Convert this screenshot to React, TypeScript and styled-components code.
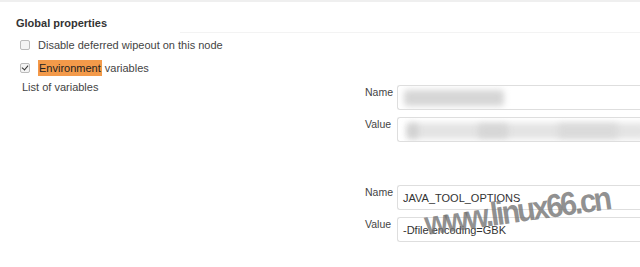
import React from "react";
import styled, { createGlobalStyle } from "styled-components";

const Global = createGlobalStyle`
  html, body { margin: 0; padding: 0; background: #fff; }
  body { font-family: "Liberation Sans", Arial, sans-serif; color: #333; }
`;

const Page = styled.div`
  position: relative;
  width: 640px;
  height: 267px;
  overflow: hidden;
  border-top: 2px solid #efefef;
  box-sizing: border-box;
`;

const Header = styled.div`
  font-size: 11px;
  font-weight: bold;
  color: #333;
  padding: 15px 0 0 16px;
  height: 16px;
  background: linear-gradient(to right, transparent 180px, #f3f3f3 180px) bottom / 100% 1px no-repeat;
`;

const CheckRow = styled.label<{ $mt: number }>`
  display: flex;
  align-items: center;
  font-size: 11px;
  color: #444;
  height: 14px;
  margin-left: 20px;
  margin-top: ${(p) => p.$mt}px;
`;

const Box = styled.span<{ $checked?: boolean }>`
  width: 8px;
  height: 8px;
  border: 1px solid #bbb;
  border-radius: 2px;
  background: #f4f4f4;
  margin-right: 8px;
  position: relative;
  display: inline-block;
  &::after {
    content: "";
    display: ${(p) => (p.$checked ? "block" : "none")};
    position: absolute;
    left: 2px;
    top: 0px;
    width: 3px;
    height: 5px;
    border: solid #333;
    border-width: 0 1.5px 1.5px 0;
    transform: rotate(40deg);
  }
`;

const Mark = styled.span`
  background: #f39a4a;
  color: #222;
  padding: 2px 1px;
  margin-right: 3px;
`;

const Body = styled.div`
  display: grid;
  grid-template-columns: 365px 1fr;
  margin-top: 6px;
`;

const ListLabel = styled.div`
  font-size: 11px;
  color: #444;
  padding-left: 22px;
`;

const Groups = styled.div`
  display: flex;
  flex-direction: column;
  gap: 43px;
  padding-top: 4px;
`;

const Group = styled.div`
  display: grid;
  grid-template-columns: 32px 260px;
  row-gap: 7px;
  align-items: start;
`;

const Label = styled.div`
  font-size: 10.5px;
  color: #444;
  padding-top: 1px;
`;

const Input = styled.div`
  position: relative;
  border: 1px solid #dedede;
  border-right: none;
  border-radius: 3px 0 0 3px;
  box-sizing: border-box;
  height: 25px;
  font-size: 11px;
  color: #333;
  padding: 0 0 0 5px;
  display: flex;
  align-items: center;
  overflow: hidden;
`;

const Blur = styled.div`
  position: absolute;
  background: #d6d6d6;
  filter: blur(3px);
  border-radius: 3px;
`;

const Watermark = styled.div`
  position: absolute;
  left: 427px;
  top: 205px;
  font-family: "Liberation Sans", Arial, sans-serif;
  font-weight: bold;
  font-size: 33px;
  line-height: 33px;
  letter-spacing: -3px;
  color: rgba(115, 115, 115, 0.78);
  transform: rotate(-8deg) scaleX(0.91);
  transform-origin: left bottom;
  white-space: nowrap;
  pointer-events: none;
`;

export default function App() {
  return (
    <Page>
      <Global />
      <Header>Global properties</Header>
      <CheckRow $mt={5}>
        <Box />
        Disable deferred wipeout on this node
      </CheckRow>
      <CheckRow $mt={9}>
        <Box $checked />
        <Mark>Environment</Mark>variables
      </CheckRow>
      <Body>
        <ListLabel>List of variables</ListLabel>
        <Groups>
          <Group>
            <Label>Name</Label>
            <Input>
              <Blur style={{ left: 6, top: 4, width: 100, height: 16 }} />
            </Input>
            <Label>Value</Label>
            <Input>
              <Blur style={{ left: 8, top: 5, width: 240, height: 16, background: "#e4e4e4" }} />
              <Blur style={{ left: 10, top: 6, width: 10, height: 14, background: "#d0d0d0" }} />
              <Blur style={{ left: 80, top: 6, width: 30, height: 14, background: "#d6d6d6" }} />
              <Blur style={{ left: 160, top: 6, width: 60, height: 14, background: "#dadada" }} />
            </Input>
          </Group>
          <Group>
            <Label>Name</Label>
            <Input>JAVA_TOOL_OPTIONS</Input>
            <Label>Value</Label>
            <Input>-Dfile.encoding=GBK</Input>
          </Group>
        </Groups>
      </Body>
      <Watermark>www.linux66.cn</Watermark>
    </Page>
  );
}
